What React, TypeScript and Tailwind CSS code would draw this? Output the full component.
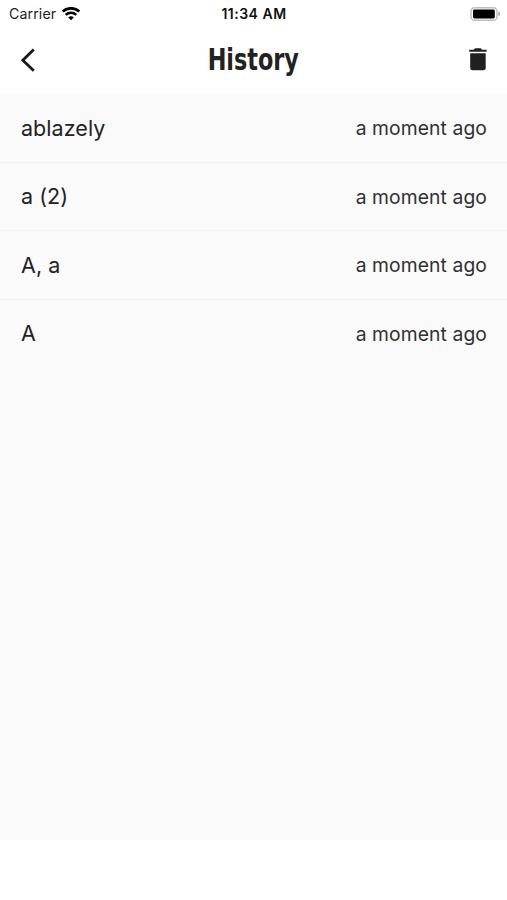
const entries = ["ablazely", "a (2)", "A, a", "A"];

function WifiIcon() {
  return (
    <svg width="18" height="14" viewBox="0 0 18 14" fill="none" stroke="#000" aria-hidden="true">
      <path d="M.7 4.5C5.3.2 12.7.2 17.3 4.5" strokeWidth="2.7" />
      <path d="M3.7 7.9C6.6 5.1 11.4 5.1 14.3 7.9" strokeWidth="2.5" />
      <path d="M6.2 10.5C7.8 8.9 10.2 8.9 11.8 10.5L9 13.3Z" fill="#000" stroke="none" />
    </svg>
  );
}

function BatteryIcon() {
  return (
    <svg width="31" height="15" viewBox="0 0 31 15" aria-hidden="true">
      <rect x="1" y=".7" width="26" height="12.6" rx="3.6" fill="#fff" stroke="#bdbdbd" strokeWidth="1.4" />
      <rect x="3" y="2.6" width="21.8" height="8.9" rx="1.4" fill="#000" />
      <path d="M28.3 4.6c2.4.7 2.4 4 0 4.7z" fill="#aaa" />
    </svg>
  );
}

export default function App() {
  return (
    <div className="flex h-[900px] w-full flex-col overflow-hidden bg-white font-['Inter','Liberation_Sans',sans-serif] text-[#222]">
      <div className="grid h-7 shrink-0 grid-cols-3 items-center pl-[8px] pr-[7px]">
        <div className="flex items-center gap-[6px] pl-px text-[14.2px] leading-7 tracking-[0.1px]">
          <span>Carrier</span>
          <WifiIcon />
        </div>
        <div className="text-center text-[14px] font-semibold leading-7 tracking-[0.5px] text-[#111]">11:34 AM</div>
        <div className="-mr-px flex justify-end">
          <BatteryIcon />
        </div>
      </div>
      <header className="flex h-[66px] shrink-0 items-center justify-between px-[17px]">
        <button aria-label="Back" className="flex h-6 w-6 -translate-y-px items-center pl-[3px]">
          <svg width="16" height="24" viewBox="0 0 16 24" className="shrink-0" fill="none" stroke="#181818" strokeWidth="2.8">
            <path d="M13.8 1.6 2.8 12.2 13.8 22.8" />
          </svg>
        </button>
        <h1 className="origin-center -translate-y-px scale-x-[0.745] font-['DejaVu_Sans',sans-serif] text-[30px] font-bold leading-[40px]">History</h1>
        <button aria-label="Clear history" className="flex h-6 w-6 -translate-y-[2px] items-center justify-center">
          <svg width="20" height="24" viewBox="0 0 20 24" fill="#202020">
            <path d="M1.2 2.8h4.5L7.1 1.3h5.6l1.4 1.5h4.5v2h-17.4z" />
            <path d="M2.2 6.2h15.5v14.6q0 2.5-2.5 2.5H4.7q-2.5 0-2.5-2.5z" />
          </svg>
        </button>
      </header>
      <main className="h-[746px] shrink-0 bg-[#fafafa]">
        <ul>
          {entries.map((entry, index) => (
            <li
              key={entry}
              className={`flex items-center justify-between pl-[21px] pr-5 ${index < entries.length - 1 ? "h-[68.5px] border-b border-[#f1f1f1]" : "h-[68px]"}`}
            >
              <span className="text-[21.5px] tracking-[0.05px]">{entry}</span>
              <span className="pt-[2px] text-[19.3px] tracking-[0.1px] text-[#303030]">a moment ago</span>
            </li>
          ))}
        </ul>
      </main>
    </div>
  );
}
